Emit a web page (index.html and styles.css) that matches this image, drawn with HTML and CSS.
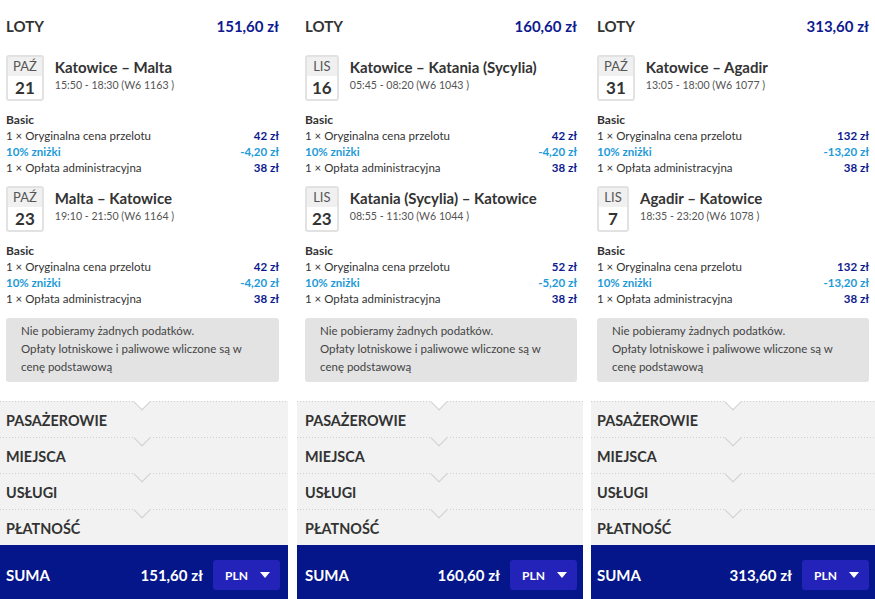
FILE: index.html
```html
<!DOCTYPE html>
<html lang="pl">
<head>
<meta charset="utf-8">
<title>Podsumowanie</title>
<link rel="stylesheet" href="styles.css">
</head>
<body>
<div class="cols">

  <section class="col col-a">
    <div class="content">
      <div class="head"><span class="head-title">LOTY</span><span class="head-price">151,60 zł</span></div>
      <div class="flight">
        <div class="date"><div class="month">PAŹ</div><div class="day">21</div></div>
        <div class="info"><div class="route">Katowice – Malta</div><div class="time">15:50 - 18:30 (W6 1163 )</div></div>
      </div>
      <div class="fare">
        <div class="fare-name">Basic</div>
        <div class="row"><span>1 × Oryginalna cena przelotu</span><span class="amt">42 zł</span></div>
        <div class="row disc"><span>10% zniżki</span><span>-4,20 zł</span></div>
        <div class="row"><span>1 × Opłata administracyjna</span><span class="amt">38 zł</span></div>
      </div>
      <div class="flight">
        <div class="date"><div class="month">PAŹ</div><div class="day">23</div></div>
        <div class="info"><div class="route">Malta – Katowice</div><div class="time">19:10 - 21:50 (W6 1164 )</div></div>
      </div>
      <div class="fare">
        <div class="fare-name">Basic</div>
        <div class="row"><span>1 × Oryginalna cena przelotu</span><span class="amt">42 zł</span></div>
        <div class="row disc"><span>10% zniżki</span><span>-4,20 zł</span></div>
        <div class="row"><span>1 × Opłata administracyjna</span><span class="amt">38 zł</span></div>
      </div>
      <div class="note">Nie pobieramy żadnych podatków.<br>Opłaty lotniskowe i paliwowe wliczone są w cenę podstawową</div>
    </div>
    <div class="acc">
      <div class="acc-item first">PASAŻEROWIE</div>
      <div class="acc-item">MIEJSCA</div>
      <div class="acc-item">USŁUGI</div>
      <div class="acc-item">PŁATNOŚĆ</div>
    </div>
    <div class="sum">
      <span class="sum-label">SUMA</span>
      <span class="sum-price">151,60 zł</span>
      <span class="cur">PLN <svg class="tri" width="10" height="6" viewBox="0 0 10 6"><path d="M0 0H10L5 6Z" fill="#fff"/></svg></span>
    </div>
  </section>

  <section class="col col-b">
    <div class="content">
      <div class="head"><span class="head-title">LOTY</span><span class="head-price">160,60 zł</span></div>
      <div class="flight">
        <div class="date"><div class="month">LIS</div><div class="day">16</div></div>
        <div class="info"><div class="route">Katowice – Katania (Sycylia)</div><div class="time">05:45 - 08:20 (W6 1043 )</div></div>
      </div>
      <div class="fare">
        <div class="fare-name">Basic</div>
        <div class="row"><span>1 × Oryginalna cena przelotu</span><span class="amt">42 zł</span></div>
        <div class="row disc"><span>10% zniżki</span><span>-4,20 zł</span></div>
        <div class="row"><span>1 × Opłata administracyjna</span><span class="amt">38 zł</span></div>
      </div>
      <div class="flight">
        <div class="date"><div class="month">LIS</div><div class="day">23</div></div>
        <div class="info"><div class="route">Katania (Sycylia) – Katowice</div><div class="time">08:55 - 11:30 (W6 1044 )</div></div>
      </div>
      <div class="fare">
        <div class="fare-name">Basic</div>
        <div class="row"><span>1 × Oryginalna cena przelotu</span><span class="amt">52 zł</span></div>
        <div class="row disc"><span>10% zniżki</span><span>-5,20 zł</span></div>
        <div class="row"><span>1 × Opłata administracyjna</span><span class="amt">38 zł</span></div>
      </div>
      <div class="note">Nie pobieramy żadnych podatków.<br>Opłaty lotniskowe i paliwowe wliczone są w cenę podstawową</div>
    </div>
    <div class="acc">
      <div class="acc-item first">PASAŻEROWIE</div>
      <div class="acc-item">MIEJSCA</div>
      <div class="acc-item">USŁUGI</div>
      <div class="acc-item">PŁATNOŚĆ</div>
    </div>
    <div class="sum">
      <span class="sum-label">SUMA</span>
      <span class="sum-price">160,60 zł</span>
      <span class="cur">PLN <svg class="tri" width="10" height="6" viewBox="0 0 10 6"><path d="M0 0H10L5 6Z" fill="#fff"/></svg></span>
    </div>
  </section>

  <section class="col col-c">
    <div class="content">
      <div class="head"><span class="head-title">LOTY</span><span class="head-price">313,60 zł</span></div>
      <div class="flight">
        <div class="date"><div class="month">PAŹ</div><div class="day">31</div></div>
        <div class="info"><div class="route">Katowice – Agadir</div><div class="time">13:05 - 18:00 (W6 1077 )</div></div>
      </div>
      <div class="fare">
        <div class="fare-name">Basic</div>
        <div class="row"><span>1 × Oryginalna cena przelotu</span><span class="amt">132 zł</span></div>
        <div class="row disc"><span>10% zniżki</span><span>-13,20 zł</span></div>
        <div class="row"><span>1 × Opłata administracyjna</span><span class="amt">38 zł</span></div>
      </div>
      <div class="flight">
        <div class="date"><div class="month">LIS</div><div class="day">7</div></div>
        <div class="info"><div class="route">Agadir – Katowice</div><div class="time">18:35 - 23:20 (W6 1078 )</div></div>
      </div>
      <div class="fare">
        <div class="fare-name">Basic</div>
        <div class="row"><span>1 × Oryginalna cena przelotu</span><span class="amt">132 zł</span></div>
        <div class="row disc"><span>10% zniżki</span><span>-13,20 zł</span></div>
        <div class="row"><span>1 × Opłata administracyjna</span><span class="amt">38 zł</span></div>
      </div>
      <div class="note">Nie pobieramy żadnych podatków.<br>Opłaty lotniskowe i paliwowe wliczone są w cenę podstawową</div>
    </div>
    <div class="acc">
      <div class="acc-item first">PASAŻEROWIE</div>
      <div class="acc-item">MIEJSCA</div>
      <div class="acc-item">USŁUGI</div>
      <div class="acc-item">PŁATNOŚĆ</div>
    </div>
    <div class="sum">
      <span class="sum-label">SUMA</span>
      <span class="sum-price">313,60 zł</span>
      <span class="cur">PLN <svg class="tri" width="10" height="6" viewBox="0 0 10 6"><path d="M0 0H10L5 6Z" fill="#fff"/></svg></span>
    </div>
  </section>

</div>
</body>
</html>
```

FILE: styles.css
```css
* { box-sizing: border-box; }
html, body { margin: 0; padding: 0; background: #fff; }
body {
  font-family: Lato, "Noto Sans", sans-serif;
  color: #333;
  width: 875px;
  height: 599px;
  overflow: hidden;
}
.cols {
  display: grid;
  grid-template-columns: 288px 286px 1fr;
  column-gap: 9px;
  height: 599px;
}
.col-c { margin-left: -1px; }
.col {
  --pl: 6px;
  --pr: 6px;
  display: flex;
  flex-direction: column;
  height: 599px;
}
.col-a { --pr: 9px; }
.col-b { --pl: 8px; }
.content {
  padding: 0 var(--pr) 0 var(--pl);
  flex: 1;
}
.head {
  display: flex;
  justify-content: space-between;
  align-items: center;
  padding-top: 16px;
  height: 36px;
  line-height: 20px;
}
.head-title { font-weight: 700; font-size: 15px; color: #333; }
.head-price { font-weight: 700; font-size: 15px; color: #0e1a8f; }

.flight {
  display: flex;
  gap: 11px;
  margin-top: 19px;
}
.fare + .flight { margin-top: 10px; }
.date {
  min-width: 32px;
  height: 46px;
  border: 2px solid #e2e2e2;
  border-radius: 3px;
  text-align: center;
  flex: none;
}
.month {
  background: #f0f0f0;
  height: 19px;
  line-height: 19px;
  padding: 0 5px;
  font-size: 13px;
  color: #555;
}
.day {
  height: 23px;
  line-height: 24px;
  padding: 0 5px;
  font-size: 17px;
  font-weight: 700;
  color: #333;
}
.route {
  font-weight: 700;
  font-size: 15px;
  line-height: 20px;
  color: #333;
  margin-top: 2px;
}
.time {
  font-size: 10.6px;
  line-height: 16px;
  color: #555;
}
.fare { margin-top: 11px; }
.fare-name {
  font-weight: 700;
  font-size: 12px;
  line-height: 16px;
}
.row {
  display: flex;
  justify-content: space-between;
  font-size: 11.5px;
  line-height: 16px;
}
.amt { font-weight: 700; color: #0e1a8f; }
.disc { font-weight: 700; color: #1d9ad8; }
.note {
  margin-top: 11px;
  background: #e3e3e3;
  border-radius: 3px;
  padding: 4px 24px 6px 15px;
  font-size: 11.5px;
  line-height: 18px;
  color: #444;
}

.acc { background: #f2f2f2; }
.acc-item {
  position: relative;
  height: 36px;
  padding: 11px 0 0 var(--pl);
  font-size: 14.4px;
  line-height: 18px;
  font-weight: 700;
  color: #333;
  background-image: linear-gradient(to right, #cfcfcf 50%, transparent 50%);
  background-size: 3px 1px;
  background-repeat: repeat-x;
  background-position: 0 0;
}
.acc-item::before {
  content: "";
  position: absolute;
  left: 136px;
  top: -5px;
  width: 11px;
  height: 11px;
  background: #f2f2f2;
  border-right: 1px solid #cfcfcf;
  border-bottom: 1px solid #cfcfcf;
  transform: rotate(45deg);
}
.acc-item.first::before { background: #fff; }

.sum {
  display: flex;
  align-items: center;
  height: 54px;
  background: #041689;
  color: #fff;
  padding: 6px var(--pr) 0 var(--pl);
}
.col-a .sum { padding-right: 8px; }
.sum-label { font-weight: 700; font-size: 15px; flex: 1; }
.sum-price { font-weight: 700; font-size: 15px; margin-right: 10px; }
.cur {
  display: flex;
  align-items: center;
  justify-content: space-between;
  width: 67px;
  height: 30px;
  padding: 0 10px 0 12px;
  background: #2323b9;
  border-radius: 3px;
  font-size: 12px;
  font-weight: 700;
}
.tri { display: block; }
```
